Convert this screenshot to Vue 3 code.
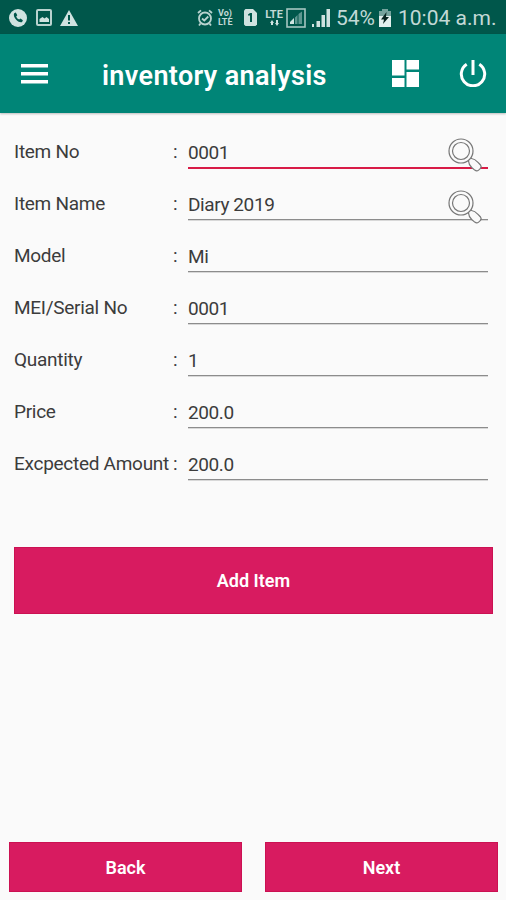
<template>
  <div class="screen">
    <div class="status-bar">
      <svg class="status-icon phone" width="18" height="18" viewBox="0 0 18 18">
        <circle cx="9" cy="9" r="9" fill="#cfe3e0" />
        <path
          d="M5.2 4.2l1.6-.6 1.5 2.6-1.1 1.2c.6 1.5 1.6 2.5 3 3.200l1.300-1 2.400 1.700-.8 1.600c-1.200.9-3.700.1-5.700-1.900-2.100-2-3.300-5.200-2.200-6.800z"
          fill="#00574b"
        />
      </svg>
      <svg class="status-icon image" width="16" height="17" viewBox="0 0 16 17">
        <rect x="1" y="1" width="14" height="15" rx="1" fill="none" stroke="#b9d3cf" stroke-width="2" />
        <path d="M3.500 13V10l3-2 2 1.500 2-1.500 2.500 2v3z" fill="#cfe3e0" />
      </svg>
      <svg class="status-icon warning" width="18" height="16" viewBox="0 0 18 16">
        <path d="M9 0l9 16H0z" fill="#cfe3e0" />
        <path d="M8 5h2v5.500H8zM8 12h2v2H8z" fill="#00574b" />
      </svg>

      <svg class="status-icon alarm" width="16" height="18" viewBox="0 0 16 18">
        <g fill="none" stroke="#b9d3cf" stroke-width="1.800">
          <circle cx="8" cy="9.500" r="6" />
          <path d="M1 4l3-2.700M15 4l-3-2.700M3.500 14.500L2 16.500M12.500 14.500l1.500 2M5 9.500l2.300 2 4-4" />
        </g>
      </svg>
      <div class="volte">
        <span>Vo)</span>
        <span>LTE</span>
      </div>
      <svg class="status-icon sim" width="13" height="17" viewBox="0 0 13 17">
        <path d="M1.500 0H9l4 4v11.500L11.500 17h-10L0 15.500v-14z" fill="#cfe3e0" />
        <path d="M4 5.500L6 4h2v9H6V6.500H4z" fill="#00574b" />
      </svg>
      <div class="lte">
        <span>LTE</span>
        <svg width="9" height="6" viewBox="0 0 9 6">
          <path d="M0 3l2-3 2 3H3v2H1V3zM5 3h1V0h2v3h1L7 6z" fill="#cfe3e0" />
        </svg>
      </div>
      <svg class="status-icon boxed" width="20" height="20" viewBox="0 0 20 20">
        <rect x="1" y="1" width="18" height="18" fill="none" stroke="#a5c6c1" stroke-width="1.600" />
        <path d="M4 16v-2l4-4v6z" fill="#cfe3e0" />
        <path d="M9 16V9.500l2.500-2.500v9zM12.500 16V6L16 3.500V16z" fill="#5e9790" />
      </svg>
      <svg class="status-icon signal" width="18" height="18" viewBox="0 0 18 18">
        <path d="M0 18v-3h2v3zM4.500 18v-6H8v6zM9.500 18V6H13v12zM14.500 18V0H18v18z" fill="#cfe3e0" />
      </svg>
      <span class="percent">54%</span>
      <svg class="status-icon battery" width="12" height="18" viewBox="0 0 12 18">
        <path d="M3.500 0h5v2H12v16H0V2h3.500z" fill="#e2efed" />
        <path d="M0 2h3.500V0h5v2H12v5H0z" fill="#75a39d" />
        <path d="M7.500 3L2 10.500h3L4 15l6-7H7z" fill="#06231f" />
      </svg>
      <span class="clock">10:04 a.m.</span>
    </div>

    <header class="app-bar">
      <button class="icon-btn menu-btn" aria-label="Menu">
        <svg width="27" height="20" viewBox="0 0 27 20">
          <path d="M0 0h27v3.500H0zM0 8h27v3.500H0zM0 16h27v3.500H0z" fill="#fff" />
        </svg>
      </button>
      <h1 class="title">inventory analysis</h1>
      <button class="icon-btn dashboard-btn" aria-label="Dashboard">
        <svg width="27" height="27" viewBox="0 0 27 27">
          <path d="M0 0h12.500v15.500H0zM14.500 0H27v9.500H14.500zM0 18h12.500v9H0zM14.500 12H27v15H14.500z" fill="#fff" />
        </svg>
      </button>
      <button class="icon-btn" aria-label="Log out">
        <svg width="28" height="27" viewBox="0 0 28 27">
          <g fill="none" stroke="#fff" stroke-width="3">
            <path d="M14 0v15" />
            <path d="M7.700 4.200a11.700 11.700 0 1 0 12.600 0" />
          </g>
        </svg>
      </button>
    </header>

    <form class="form" @submit.prevent>
      <div v-for="(field, index) in fields" :key="field.label" class="row">
        <label class="label" :for="'field-' + index">{{ field.label }}</label>
        <span class="colon">:</span>
        <div class="control">
          <input
            :id="'field-' + index"
            v-model="field.value"
            class="input"
            :class="{ active: index === activeIndex }"
            @focus="activeIndex = index"
          />
          <svg v-if="field.search" class="search-icon" width="36" height="36" viewBox="0 0 36 36">
            <g fill="#fafafa" stroke="#777" stroke-width="1.200">
              <path d="M19.500 20l2.500-1.500 1.500 2c2.500.3 4.500 1.700 6.500 3.800l2.500 2.700c1 1.300.8 2.500-.3 3.600l-1.600 1.500c-1.200 1-2.500 1-3.900 0l-3-2.600c-2.500-2.300-3-4-3.200-6.500z" />
              <circle cx="13" cy="13" r="12" />
              <circle cx="13" cy="13" r="8.500" />
            </g>
          </svg>
        </div>
      </div>
    </form>

    <button class="btn add-btn">Add Item</button>

    <footer class="footer">
      <button class="btn">Back</button>
      <button class="btn">Next</button>
    </footer>
  </div>
</template>

<script setup>
import { ref } from "vue";

const activeIndex = ref(0);

const fields = ref([
  { label: "Item No", value: "0001", search: true },
  { label: "Item Name", value: "Diary 2019", search: true },
  { label: "Model", value: "Mi" },
  { label: "MEI/Serial No", value: "0001" },
  { label: "Quantity", value: "1" },
  { label: "Price", value: "200.0" },
  { label: "Excpected Amount", value: "200.0" },
]);
</script>

<style>
body {
  background-color: #fafafa;
}
</style>

<style scoped>
.screen {
  box-sizing: border-box;
  display: flex;
  flex-direction: column;
  width: 506px;
  height: 900px;
  background-color: #fafafa;
  font-family: Roboto, "Liberation Sans", sans-serif;
  overflow: hidden;
}
.status-bar {
  box-sizing: border-box;
  display: flex;
  align-items: center;
  flex: none;
  height: 34px;
  padding: 1px 10px 0 9px;
  background-color: #00574b;
  color: #c2d9d6;
}
.status-icon {
  flex: none;
}
.image {
  margin-left: 9px;
}
.warning {
  margin-left: 8px;
}
.alarm {
  margin-left: 119px;
}
.volte {
  display: flex;
  flex-direction: column;
  flex: none;
  width: 17px;
  margin-left: 5px;
  font-size: 9px;
  line-height: 9px;
  font-weight: 700;
}
.sim {
  margin-left: 9px;
}
.lte {
  display: flex;
  flex-direction: column;
  align-items: center;
  flex: none;
  width: 20px;
  margin-left: 7px;
  font-size: 11px;
  line-height: 11px;
  font-weight: 700;
}
.boxed {
  margin-left: 2px;
}
.signal {
  margin-left: 6px;
}
.percent {
  flex: none;
  width: 39px;
  margin-left: 6px;
  font-size: 21px;
  line-height: 32px;
}
.battery {
  margin-left: 4px;
}
.clock {
  flex: none;
  margin-left: 7px;
  font-size: 21px;
  line-height: 32px;
  white-space: nowrap;
}
.app-bar {
  box-sizing: border-box;
  display: flex;
  align-items: center;
  flex: none;
  height: 79px;
  padding: 0 19px 0 21px;
  background-color: #008577;
  box-shadow: 0 1px 2px rgba(0, 0, 0, 0.25);
}
.icon-btn {
  display: flex;
  flex: none;
  padding: 0;
  border: none;
  background: none;
  cursor: pointer;
}
.title {
  flex: 1;
  margin: 5px 0 0 54px;
  color: #fff;
  font-size: 27px;
  line-height: 32px;
  font-weight: 600;
  letter-spacing: 0.35px;
  white-space: nowrap;
}
.dashboard-btn {
  margin-right: 40px;
}
.form {
  display: flex;
  flex-direction: column;
  padding: 5px 18px 0 14px;
}
.row {
  display: flex;
  height: 52px;
}
.label {
  width: 159px;
  padding-top: 22px;
  color: #3c3c3c;
  font-size: 19px;
  line-height: 24px;
  letter-spacing: -0.28px;
  white-space: nowrap;
}
.colon {
  width: 15px;
  padding-top: 22px;
  color: #3c3c3c;
  font-size: 19px;
  line-height: 24px;
}
.control {
  position: relative;
  flex: 1;
}
.input {
  box-sizing: border-box;
  display: block;
  width: 100%;
  height: 51px;
  padding: 19px 0 0;
  border: none;
  border-bottom: 1px solid #8c8c8c;
  outline: none;
  background: none;
  color: #3c3c3c;
  font-family: inherit;
  font-size: 19px;
  letter-spacing: -0.4px;
}
.row:nth-child(n + 2) .input {
  height: 50px;
  padding-top: 20px;
  border-bottom-width: 1px;
  box-shadow: 0 1px 0 #d8d8d8;
}
.row .input.active {
  height: 51px;
  padding-top: 20px;
  border-bottom: 2px solid #d81b46;
  box-shadow: none;
}
.search-icon {
  position: absolute;
  top: 20px;
  right: 4px;
}
.btn {
  border: 1px solid #cb1152;
  background-color: #d81b60;
  color: #fff;
  font-family: inherit;
  font-size: 18px;
  font-weight: 600;
  cursor: pointer;
}
.add-btn {
  flex: none;
  height: 67px;
  margin: 65px 13px 0 14px;
}
.footer {
  display: flex;
  gap: 23px;
  margin-top: auto;
  padding: 0 8px 8px 9px;
}
.footer .btn {
  flex: 1;
  height: 50px;
}
</style>
